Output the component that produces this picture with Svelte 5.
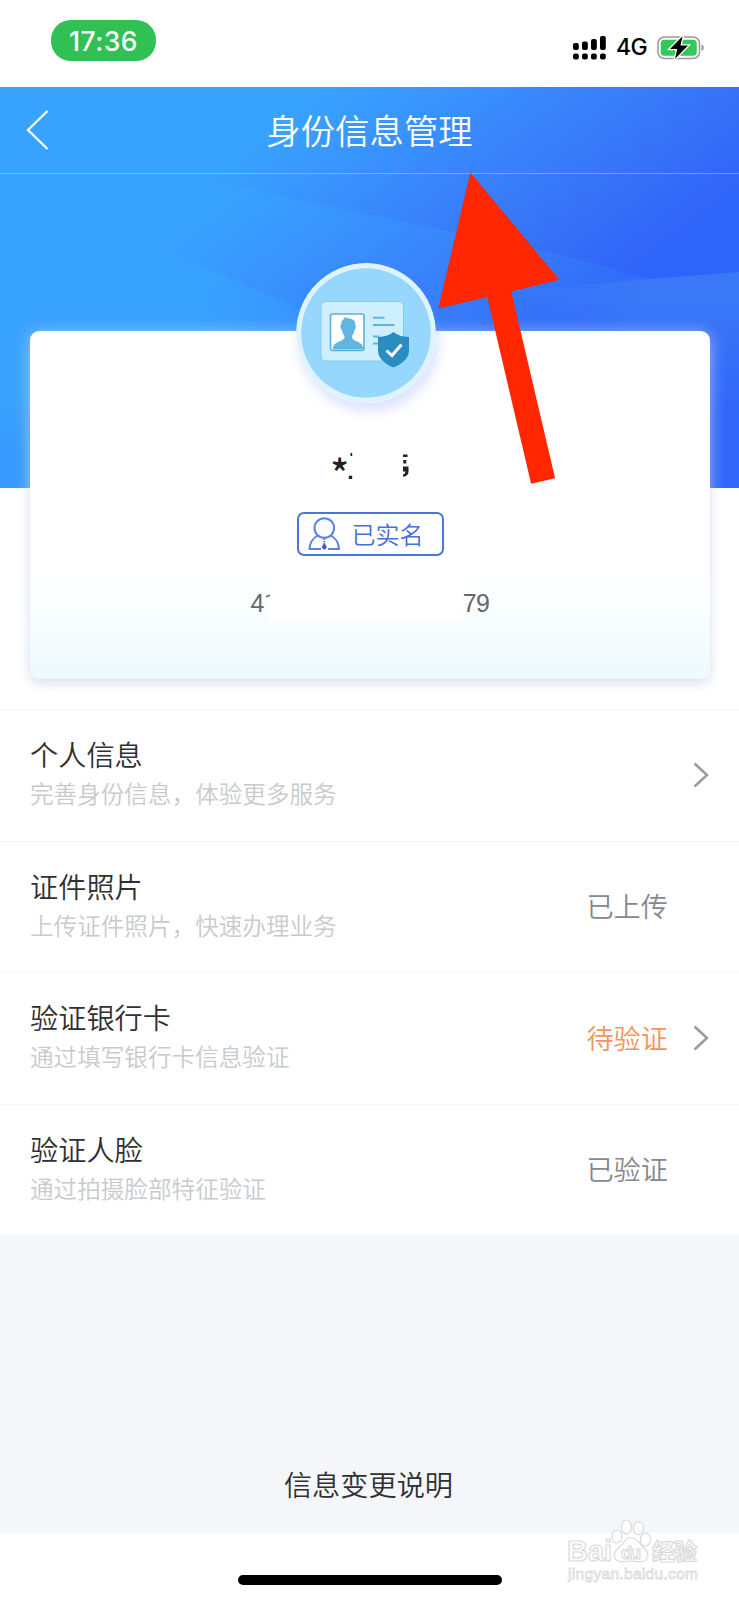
<script>
    //identity management page
    const rows = [
        { title: "个人信息", desc: "完善身份信息，体验更多服务", status: "", arrow: true },
        { title: "证件照片", desc: "上传证件照片，快速办理业务", status: "已上传", arrow: false },
        { title: "验证银行卡", desc: "通过填写银行卡信息验证", status: "待验证", arrow: true, pending: true },
        { title: "验证人脸", desc: "通过拍摄脸部特征验证", status: "已验证", arrow: false },
    ];

    const signal = [
        { x: 0, y: 7, h: 7 },
        { x: 9, y: 5.5, h: 8.5 },
        { x: 18, y: 3, h: 11 },
        { x: 27, y: 0, h: 14 },
    ];
</script>

<div class="page">
    <header class="status_bar">
        <span class="time">17:36</span>
        <div class="status_right">
            <svg width="33" height="24" viewBox="0 0 33 24">
                {#each signal as bar}
                    <rect x={bar.x} y={bar.y} width="5.8" height={bar.h} rx="2" />
                    <rect x={bar.x} y="17.5" width="5.8" height="6" rx="2" />
                {/each}
            </svg>
            <span class="network">4G</span>
            <svg width="48" height="25" viewBox="0 0 48 25">
                <rect x="1" y="2" width="41.5" height="21.5" rx="6.5" fill="none" stroke="#9b9b9d" stroke-width="1.5" />
                <path d="M44.5 9.5c3 .8 3 5.700 0 6.500z" fill="#9b9b9d" />
                <rect x="3.700" y="4.700" width="36" height="16" rx="3.500" fill="#34c759" />
                <path d="M25.500 1.200L13 14h7.200L18 24 31 10.500h-7.500z" fill="#000" stroke="#fff" stroke-width="2.600" paint-order="stroke" />
            </svg>
        </div>
    </header>

    <section class="hero">
        <svg class="hero_bg" width="739" height="401" viewBox="0 87 739 401" preserveAspectRatio="none">
            <defs>
                <linearGradient id="base" gradientUnits="userSpaceOnUse" x1="200" y1="225" x2="395" y2="485">
                    <stop offset="0" stop-color="#38a2ff" />
                    <stop offset=".5" stop-color="#3985fb" />
                    <stop offset="1" stop-color="#3168f8" />
                </linearGradient>
                <linearGradient id="upper" gradientUnits="userSpaceOnUse" x1="270" y1="135" x2="465" y2="395">
                    <stop offset="0" stop-color="#38a2ff" />
                    <stop offset=".45" stop-color="#3984fb" />
                    <stop offset=".8" stop-color="#366ff7" />
                    <stop offset="1" stop-color="#2f64f9" />
                </linearGradient>
                <linearGradient id="lower" gradientUnits="userSpaceOnUse" x1="200" y1="315" x2="440" y2="380">
                    <stop offset="0" stop-color="#38a2ff" />
                    <stop offset="1" stop-color="#3780fa" />
                </linearGradient>
                <linearGradient id="shine" gradientUnits="userSpaceOnUse" x1="500" y1="290" x2="640" y2="310">
                    <stop offset="0" stop-color="#3a7bf9" stop-opacity="0" />
                    <stop offset="1" stop-color="#3a78f8" />
                </linearGradient>
                <linearGradient id="fall" x1="0" y1="0" x2="0" y2="1">
                    <stop offset="0" stop-color="#3066f9" stop-opacity="0" />
                    <stop offset=".6" stop-color="#3066f9" />
                </linearGradient>
            </defs>
            <rect y="87" width="739" height="401" fill="url(#base)" />
            <path d="M0 87H739V272L650 279 565 256 452 232 221 183 0 150z" fill="url(#upper)" />
            <path d="M0 180L181 258 292 305 400 350V488H0z" fill="url(#lower)" />
            <path d="M500 292L650 279 739 272V488H500z" fill="url(#shine)" />
            <rect x="500" y="300" width="239" height="188" fill="url(#fall)" />
            <rect y="400" width="200" height="88" fill="url(#fall)" opacity=".15" />
        </svg>

        <nav class="nav">
            <svg class="back" width="24" height="42" viewBox="0 0 24 42">
                <path d="M21.500 2L2 21 21.500 40" fill="none" stroke="#fff" stroke-width="2.300" />
            </svg>
            <h1>身份信息管理</h1>
        </nav>

        <div class="card">
            <svg class="avatar" width="140" height="140" viewBox="0 0 140 140">
                <circle cx="70" cy="70" r="70" fill="#dff3fe" />
                <circle cx="70" cy="70" r="64.800" fill="#98d7fd" />
                <rect x="25" y="38.500" width="82.500" height="59.500" rx="5" fill="#cfeffe" stroke="#85c9f2" />
                <rect x="34.500" y="51" width="33.500" height="36.500" rx="2" fill="#fff" stroke="#5bafd8" stroke-width="1.600" />
                <path d="M36.500 86.500c.5-5 3.500-7 7.500-8.300 3-1 4.500-2.200 4.700-5.200-1.600-1.500-2.300-3.600-2.700-6-1.600-1-2.200-5.400-.7-6 0-2.200.8-4.200 2.700-5l.5-2c1.500 1.200 3.400 1 5.500 1.500 4.300 1 5.500 3 5.200 6.300 1.200 1.200.2 5-.8 5.700-.4 2-1.200 4-2.400 5.500.1 3 1.600 4.200 4.500 5.200 4 1.300 6.500 3.300 7 8.300z" fill="#62b5de" />
                <path d="M77 54.700H88.500M77 62H98.500M77 73.500H83M77 80.500H84" stroke="#62b5d6" stroke-width="2" />
                <path d="M97.500 69c4.500 3.500 9 4.700 15.500 5v13.500c0 7.500-6 13-15.500 17-9.500-4-15.500-9.500-15.500-17V74c6.500-.3 11-1.500 15.500-5z" fill="#298dc1" />
                <path d="M90.500 87.500l5.500 5 9.500-11" fill="none" stroke="#fff" stroke-width="3" />
            </svg>

            <!-- the middle of the name is hidden -->
            <svg class="name" width="90" height="60" viewBox="326 440 90 60">
                <text x="329.500" y="488" font-size="38">*</text>
                <rect x="349.500" y="453" width="1.700" height="3" />
                <rect x="347.800" y="475.700" width="3.400" height="3.300" />
                <rect x="402" y="454.500" width="4.500" height="2.500" />
                <rect x="402.300" y="460" width="3" height="3.500" />
                <path d="M402 466.500h5.500v5q0 4.500-5.500 5.300v-2.300q2.500-.7 2.500-3H402z" />
            </svg>

            <div class="verified">
                <svg width="33" height="34" viewBox="0 0 33 34" fill="none" stroke="#5c82e5" stroke-width="2">
                    <circle cx="16.300" cy="11" r="9.800" fill="#fcfdff" />
                    <path d="M9.500 18.500C4.500 21.500 1.800 26 1.500 32H13M23 18.500c5 3 7.700 7.500 8 13.500H20" />
                    <path d="M16.300 21v4" stroke-dasharray="2 1" />
                    <path d="M16.300 25l2.700 5.500-2.700 2.500-2.700-2.500z" fill="#3b60cf" stroke="none" />
                </svg>
                <span>已实名</span>
            </div>

            <div class="id_number">
                <span class="id_start">4</span>
                <span class="id_hidden"></span>
                <span>79</span>
            </div>
        </div>
    </section>

    <ul class="list">
        {#each rows as row}
            <li>
                <div class="row_text">
                    <p class="title">{row.title}</p>
                    <p class="desc">{row.desc}</p>
                </div>
                <span class="status" class:pending={row.pending}>{row.status}</span>
                <div class="chevron">
                    {#if row.arrow}
                        <svg width="16" height="26" viewBox="0 0 16 26">
                            <path d="M1.500 1.500L14 13 1.500 24.500" fill="none" stroke="#999b9e" stroke-width="2.500" />
                        </svg>
                    {/if}
                </div>
            </li>
        {/each}
    </ul>

    <footer class="notes">信息变更说明</footer>
    <div class="home_area">
        <div class="home_bar"></div>
    </div>

    <svg class="pointer" width="122" height="312" viewBox="438 172 122 312">
        <path d="M470.300 172.500L559.400 279.700 511.300 291.500 555.100 478.200 531.100 483.700 487.300 297.100 438.300 308.500z" fill="#ff2600" />
    </svg>

    <svg class="watermark" width="140" height="70" viewBox="562 1516 140 70">
        <g fill="#fff" fill-opacity=".75" stroke="#d9dadc" stroke-width="1.200">
            <text x="567" y="1561" font-size="29" font-weight="700" textLength="45">Bai</text>
            <ellipse cx="617" cy="1536.500" rx="5" ry="6.500" />
            <ellipse cx="626.500" cy="1527" rx="5" ry="7" />
            <ellipse cx="638.500" cy="1528" rx="5" ry="6.700" />
            <ellipse cx="645.500" cy="1539.500" rx="5" ry="6.500" />
            <path d="M631 1537.500c6 0 8 6 12 9.500 5 4.500 6 8 4 11.500-3 5-10 2.500-16 2.500s-12 2.500-15.500-2c-3-4-1-8 4-12 4-3.500 5.500-9.500 11.500-9.500z" />
            <text x="621" y="1559" font-size="19" font-weight="700" textLength="20">du</text>
            <text class="cjk" x="652" y="1560" font-size="23" font-weight="700" textLength="45">经验</text>
            <text x="568" y="1579" font-size="15.500" stroke-width=".8" textLength="130">jingyan.baidu.com</text>
        </g>
    </svg>
</div>

<style>
    :global(body) {
        background: #fff;
    }

    .page {
        position: relative;
        width: 739px;
        height: 1600px;
        overflow: hidden;
        display: flex;
        flex-direction: column;
        background: #fff;
        font-family: "Noto Sans CJK SC", sans-serif;
        font-weight: 350;
        color: #2e3033;
    }

    .status_bar {
        height: 87px;
        box-sizing: border-box;
        padding: 20px 34px 0 51px;
        display: flex;
        justify-content: space-between;
        align-items: flex-start;
    }

    .time {
        width: 105px;
        height: 41px;
        border-radius: 20px;
        background: #30c054;
        color: #fff;
        font: 500 26.5px/42px Inter, sans-serif;
        letter-spacing: 0.5px;
        text-align: center;
    }

    .status_right {
        display: flex;
        align-items: center;
        padding-top: 14px;
    }

    .network {
        width: 32px;
        margin: 0 9px 0 10px;
        font: 500 23px/27px Inter, sans-serif;
        color: #000;
        letter-spacing: -0.5px;
    }

    .hero {
        position: relative;
        height: 622px;
        display: flex;
        flex-direction: column;
    }

    .hero_bg {
        position: absolute;
        top: 0;
        left: 0;
    }

    .nav {
        position: relative;
        height: 86px;
        display: flex;
        align-items: center;
        border-bottom: 1px solid rgba(255, 255, 255, 0.3);
    }

    .back {
        margin-left: 26px;
    }

    .nav h1 {
        flex: 1;
        margin: 0 50px 3px 0;
        color: #fff;
        font-size: 34.4px;
        font-weight: 350;
        line-height: 50px;
        text-align: center;
    }

    .card {
        position: relative;
        height: 348px;
        margin: 157px 29px 0 30px;
        border-radius: 9px;
        background: linear-gradient(#fff 0, #fff 70%, #f8fdff 82%, #eefafe 100%);
        box-shadow: 0 2px 16px rgba(225, 232, 248, 0.65), 0 4px 9px rgba(80, 90, 120, 0.17);
        display: flex;
        flex-direction: column;
        align-items: center;
    }

    .avatar {
        margin: -68px 9px 0 0;
        border-radius: 50%;
        box-shadow: 3px 8px 12px rgba(100, 140, 255, 0.24);
        flex: none;
    }

    .name {
        margin: 37px 0 0 4px;
        fill: #222;
        font-weight: 500;
        flex: none;
    }

    .verified {
        width: 147px;
        height: 44px;
        box-sizing: border-box;
        margin: 12px 0 0;
        padding-left: 9px;
        border: 2px solid #4a75df;
        border-radius: 7px;
        display: flex;
        align-items: center;
        gap: 11px;
        color: #456fda;
        font-size: 24px;
        line-height: 40px;
    }

    .id_number {
        width: 239px;
        margin-top: 28px;
        display: flex;
        align-items: center;
        color: #666;
        font: 25px/38px "Liberation Sans", sans-serif;
        letter-spacing: -0.5px;
    }

    .id_start {
        width: 20px;
        position: relative;
    }

    /* what is left of the second digit */
    .id_start::after {
        content: "";
        position: absolute;
        left: 15px;
        top: 11px;
        width: 4px;
        height: 2px;
        background: #777;
        transform: rotate(-25deg);
    }

    .id_hidden {
        width: 193px;
        height: 38px;
        background: #fff;
    }

    .list {
        margin: 0;
        padding: 0;
        list-style: none;
    }

    .list li {
        height: 131.5px;
        box-sizing: border-box;
        padding: 0 30px;
        border-top: 1px solid #f5f6f7;
        display: flex;
        align-items: center;
    }

    .row_text {
        flex: 1;
        padding-bottom: 4px;
    }

    .row_text p {
        margin: 0;
    }

    .row_text .title {
        font-size: 28.2px;
        line-height: 41px;
    }

    .row_text .desc {
        font-size: 23.6px;
        line-height: 39px;
        color: #c8cacd;
    }

    .status {
        padding-bottom: 3px;
        font-size: 27.2px;
        color: #86888b;
    }

    .status.pending {
        color: #f4935a;
    }

    .chevron {
        width: 41px;
        display: flex;
        justify-content: flex-end;
    }

    .notes {
        height: 298px;
        box-sizing: border-box;
        padding: 228px 2px 0 0;
        background: #f5f6f9;
        font-size: 28.2px;
        line-height: 42px;
        text-align: center;
    }

    .home_area {
        flex: 1;
        display: flex;
        justify-content: center;
        align-items: flex-start;
        padding-top: 42px;
    }

    .home_bar {
        width: 264px;
        height: 10px;
        border-radius: 5px;
        background: #000;
    }

    .pointer {
        position: absolute;
        left: 438px;
        top: 172px;
    }

    .watermark {
        position: absolute;
        left: 562px;
        top: 1516px;
        font-family: "Liberation Sans", sans-serif;
    }

    .cjk {
        font-family: "Noto Sans CJK SC", sans-serif;
    }
</style>
